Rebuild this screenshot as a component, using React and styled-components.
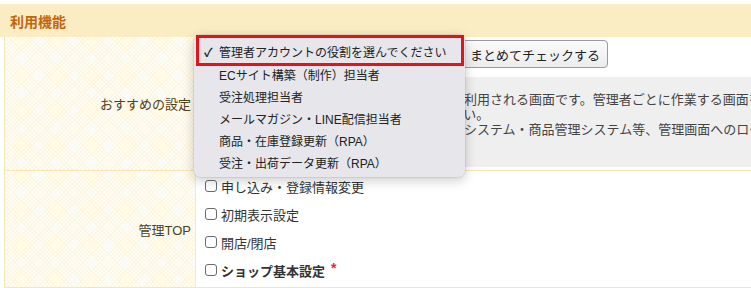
import React from "react";
import styled, { createGlobalStyle } from "styled-components";

const Global = createGlobalStyle`
  html, body { margin: 0; padding: 0; background: #fff; overflow: hidden; }
  body { font-family: "Liberation Sans", "Noto Sans CJK JP", sans-serif; color: #333; }
`;

const Page = styled.div`
  width: 1100px;
  padding-top: 4px;
`;

const Header = styled.div`
  height: 33px;
  background: #faedc4;
  display: flex;
  align-items: center;
  padding-left: 10px;
`;

const Title = styled.h2`
  margin: 0;
  font-size: 14px;
  font-weight: bold;
  color: #c4640f;
`;

const Table = styled.div`
  margin-left: 4px;
  border-left: 1px solid #f5e6b6;
`;

const Row = styled.div`
  display: grid;
  grid-template-columns: 191px 1fr;
  border-bottom: 1px solid #f5e6b6;
`;

const LabelCell = styled.div`
  display: flex;
  align-items: center;
  justify-content: flex-end;
  padding-right: 4px;
  font-size: 13px;
  color: #4e421c;
  background-color: #fffdf7;
  background-image:
    repeating-linear-gradient(45deg, #fdf6e0 0 1px, transparent 1px 3px),
    repeating-linear-gradient(-45deg, #fdf6e0 0 1px, transparent 1px 3px);
  border-right: 1px solid #f7ebc2;
`;

const ValueCell = styled.div`
  padding: ${(p) => p.$pad || "3px 0 3px 3px"};
  background: #fff;
`;

const Controls = styled.div`
  display: flex;
  align-items: center;
  gap: 5px;
  height: 28px;
`;

const SelectWrap = styled.div`
  position: relative;
  width: 258px;
  height: 24px;
`;

const Menu = styled.ul`
  position: absolute;
  left: -5px;
  top: -7px;
  width: 271px;
  margin: 0;
  padding: 5px 0 4px;
  list-style: none;
  background: #e6e6eb;
  border-radius: 6px;
  box-shadow: 0 3px 12px rgba(0, 0, 0, 0.22), 0 0 0 0.5px rgba(0, 0, 0, 0.12);
  z-index: 10;
`;

const MenuItem = styled.li`
  position: relative;
  height: 22px;
  display: flex;
  align-items: center;
  padding-left: 25px;
  font-size: 12px;
  color: #222;
  margin-bottom: ${(p) => (p.$first ? "1px" : "0")};
`;

const Check = styled.span`
  position: absolute;
  left: 10px;
  font-size: 12px;
  font-weight: bold;
`;

const Highlight = styled.div`
  position: absolute;
  left: 2px;
  right: 1px;
  top: 0;
  height: 31px;
  border: 3px solid #e3131b;
  box-sizing: border-box;
  pointer-events: none;
`;

const Button = styled.button`
  height: 28px;
  width: 146px;
  padding: 0 4px;
  white-space: nowrap;
  font-family: inherit;
  font-size: 13px;
  color: #222;
  background: linear-gradient(#fbfbfb, #ececec);
  border: 1px solid #9a9a9a;
  border-radius: 4px;
`;

const Note = styled.div`
  margin-top: 9px;
  background: #efefef;
  padding: 15px 10px 15px 18px;
  font-size: 13px;
  line-height: 15px;
  color: #444;
  white-space: nowrap;
`;

const CheckList = styled.div`
  display: flex;
  flex-direction: column;
  padding: 1px 0 3px 9px;
`;

const CheckItem = styled.label`
  height: 28px;
  display: flex;
  align-items: center;
  gap: 4px;
  font-size: 13px;
  color: #333;
  font-weight: ${(p) => (p.$bold ? "bold" : "normal")};
`;

const Box = styled.input`
  appearance: none;
  margin: 0;
  width: 12px;
  height: 12px;
  border: 1px solid #6b6b6b;
  border-radius: 3px;
  background: #fff;
`;

const Required = styled.sup`
  color: #e8233c;
  font-size: 14px;
  margin-left: 2px;
  position: relative;
  top: -2px;
`;

const menuItems = [
  "ECサイト構築（制作）担当者",
  "受注処理担当者",
  "メールマガジン・LINE配信担当者",
  "商品・在庫登録更新（RPA）",
  "受注・出荷データ更新（RPA）",
];

const checks = [
  { label: "申し込み・登録情報変更" },
  { label: "初期表示設定" },
  { label: "開店/閉店" },
  { label: "ショップ基本設定", bold: true, required: true },
];

export default function App() {
  return (
    <Page>
      <Global />
      <Header>
        <Title>利用機能</Title>
      </Header>
      <Table>
        <Row>
          <LabelCell>おすすめの設定</LabelCell>
          <ValueCell>
            <Controls>
              <SelectWrap>
                <Menu>
                  <MenuItem $first>
                    <Check>✓</Check>
                    管理者アカウントの役割を選んでください
                  </MenuItem>
                  {menuItems.map((m) => (
                    <MenuItem key={m}>{m}</MenuItem>
                  ))}
                  <Highlight />
                </Menu>
              </SelectWrap>
              <Button>まとめてチェックする</Button>
            </Controls>
            <Note>
              おすすめの設定は、各担当者の業務でよく利用される画面です。管理者ごとに作業する画面をまとめてチェックできます。
              <br />
              各項目のチェックを追加・解除してください。
              <br />
              ※自動化ツールをご利用の方は、受注管理システム・商品管理システム等、管理画面へのログイン権限が必要です。
              <br />
              詳しくはマニュアルをご確認ください。
            </Note>
          </ValueCell>
        </Row>
        <Row>
          <LabelCell>管理TOP</LabelCell>
          <ValueCell $pad="0">
            <CheckList>
              {checks.map((c) => (
                <CheckItem key={c.label} $bold={c.bold}>
                  <Box type="checkbox" />
                  {c.label}
                  {c.required && <Required>*</Required>}
                </CheckItem>
              ))}
            </CheckList>
          </ValueCell>
        </Row>
      </Table>
    </Page>
  );
}
